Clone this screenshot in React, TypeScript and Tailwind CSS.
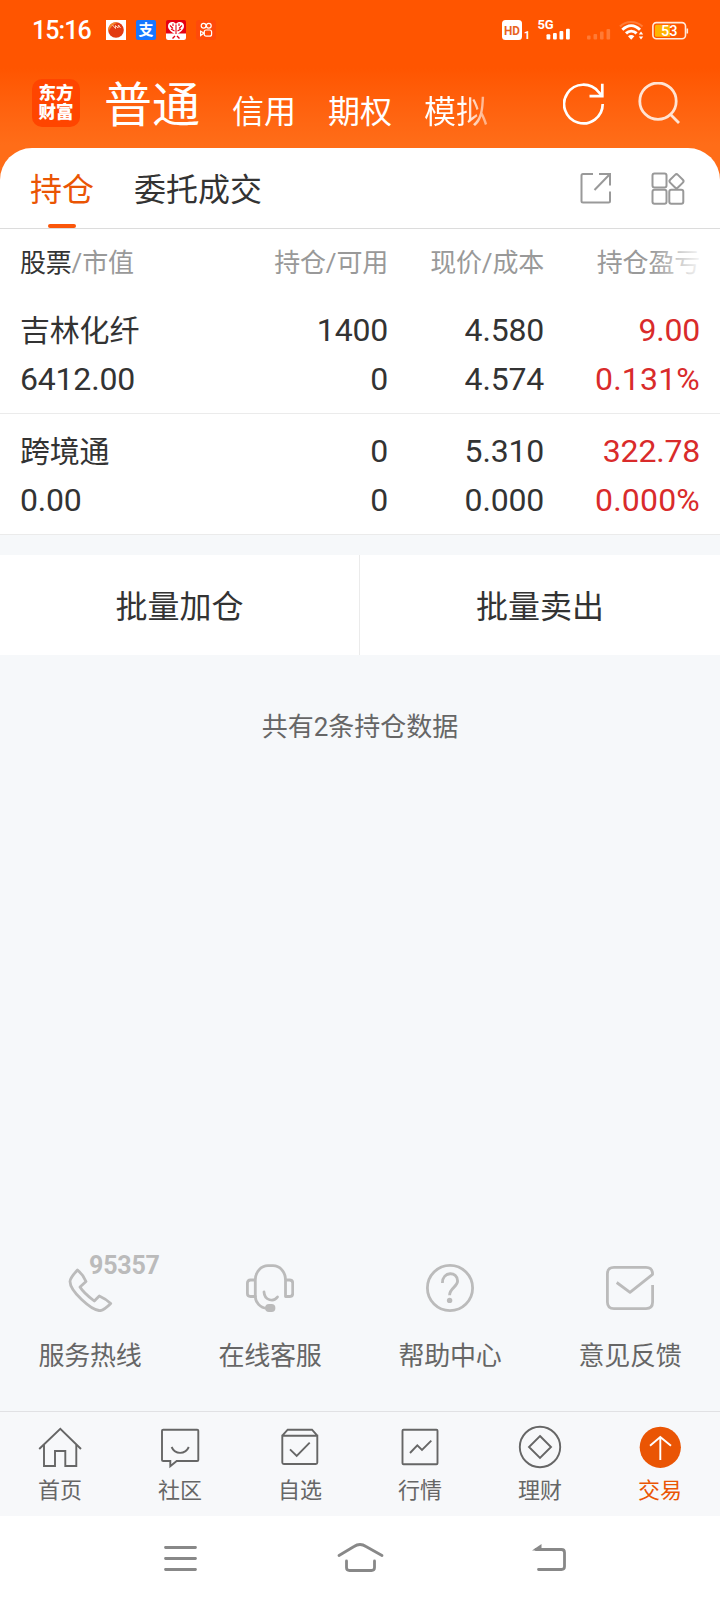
import React from 'react';

interface Holding {
  name: string;
  marketValue: string;
  quantity: string;
  available: string;
  price: string;
  cost: string;
  profit: string;
  profitRate: string;
}

const holdings: Holding[] = [
  {
    name: '吉林化纤',
    marketValue: '6412.00',
    quantity: '1400',
    available: '0',
    price: '4.580',
    cost: '4.574',
    profit: '9.00',
    profitRate: '0.131%',
  },
  {
    name: '跨境通',
    marketValue: '0.00',
    quantity: '0',
    available: '0',
    price: '5.310',
    cost: '0.000',
    profit: '322.78',
    profitRate: '0.000%',
  },
];

const services = [
  {
    label: '服务热线',
    badge: '95357',
    icon: (
      <path d="M11.5 6Q4 14 4 17.5C4 27 25 46.5 34 46.7Q38 46.3 44.7 39.5Q40 35 33.3 32L28.3 37C23 33 17 28 14 23L20 17.5Q17 10.5 11.5 6Z" />
    ),
  },
  {
    label: '在线客服',
    icon: (
      <>
        <path d="M9.3 33V16C9.3 8 15 1.7 22 1.7H27C34 1.7 39.5 8 39.5 16V32.5H43.5Q46.7 32.5 46.7 29.5V19Q46.7 16 43.5 16H39.5" />
        <path d="M9 16H4.5Q1.4 16 1.4 19V29.5Q1.4 32.5 4.5 32.5H9.3C9.3 38 14 44 21 44.2" />
        <path d="M18 28C18.5 37 28 38 31.5 33" strokeLinecap="round" />
        <rect x="20.5" y="41.5" width="7.5" height="5" rx="2.5" fill="currentColor" />
      </>
    ),
  },
  {
    label: '帮助中心',
    icon: (
      <>
        <circle cx="24" cy="24" r="22.6" />
        <path d="M16.4 19C16.400 7 31.600 7 31.600 17C31.600 23 23.600 24 23.600 31.200" />
        <circle cx="23.6" cy="36.4" r="2.7" fill="currentColor" stroke="none" />
      </>
    ),
  },
  {
    label: '意见反馈',
    icon: (
      <path d="M46.6 21V38Q46.6 44.6 40 44.6H8Q1.4 44.6 1.4 38V10Q1.4 3.4 8 3.4H40Q46.6 3.4 46.6 10.3L24 28.3L10.7 18.5" />
    ),
  },
];

const navItems = [
  {
    label: '首页',
    icon: (
      <>
        <path d="M0.2 23L21.3 2.7L42 23" />
        <path d="M5 19V40H16V25H26.3V40H37.3V19" />
      </>
    ),
  },
  {
    label: '社区',
    icon: (
      <>
        <path d="M4.2 3.7H38.2Q39.3 3.7 39.3 4.8V34Q39.3 35 38.2 35H17.7L11.3 40.3V35H4.2Q3 35 3 34V4.8Q3 3.7 4.2 3.7Z" />
        <path d="M12.6 21C16 28.8 26.2 28.8 29.8 21" />
      </>
    ),
  },
  {
    label: '自选',
    icon: (
      <>
        <path d="M3.3 9.7V36.5Q3.3 38 4.8 38H36.8Q38.3 38 38.3 36.5V9.7ZL8.7 3.7H33L38.3 9.7" />
        <path d="M11 23.3L17.7 30L30.7 16.7" />
      </>
    ),
  },
  {
    label: '行情',
    icon: (
      <>
        <rect x="3.5" y="3.8" width="35" height="34.5" rx="1" />
        <path d="M11 27L18.3 19.3L23 24L32.3 14.7" />
      </>
    ),
  },
  {
    label: '理财',
    icon: (
      <>
        <circle cx="21" cy="21" r="20.2" />
        <path d="M21 10L32 21L21 32L10 21Z" />
      </>
    ),
  },
  {
    label: '交易',
    active: true,
    icon: (
      <>
        <circle cx="21.3" cy="21.3" r="20.6" fill="#ea5504" stroke="none" />
        <path d="M21.3 34V11M11 19.7L21.3 11L32 19.7" stroke="#fff" />
      </>
    ),
  },
];

function StatusBar() {
  return (
    <div className="flex h-[60px] items-center pl-8 pr-[31px] text-white">
      <span className="w-[74px] text-[25px] leading-none font-medium tracking-[-0.9px]">15:16</span>
      <div className="flex gap-2.5">
        <svg width="20" height="20" viewBox="0 0 20 20">
          <rect width="20" height="20" fill="#fff" />
          <circle cx="10" cy="10" r="7.8" fill="#e23a12" />
          <path d="M2.500 12C1 5 7 1 12 2.500C7 4 4 8 2.500 12Z" fill="#f58a2c" />
          <path d="M6.500 5L9.500 8.500L9.500 5.500L12 8L12.500 5L14.500 8" fill="none" stroke="#ffe1c9" strokeWidth="0.900" />
        </svg>
        <div className="flex size-5 items-center justify-center rounded-xs bg-[#1777ff] text-[15px] leading-none font-bold">
          支
        </div>
        <svg width="20" height="20" viewBox="0 0 20 20">
          <rect width="20" height="20" rx="2" fill="#e60012" />
          <path d="M0 13.500H20V18Q20 20 18 20H2Q0 20 0 18Z" fill="#fff" />
          <path d="M10 15C6 12 2 10 2 6C2 2 7.500 0.500 10 4C12.500 0.500 18 2 18 6C18 10 14 12 10 15Z" fill="#fff" />
          <path
            d="M10 4.500V14M4 5.500L7 8.500M16 5.500L13 8.500M7 3.500V6M13 3.500V6M5 9L8.500 11M15 9L11.500 11"
            fill="none"
            stroke="#e60012"
            strokeWidth="1.100"
          />
          <path d="M6.5 18.500L9 16M13.500 18.500L11 16" fill="none" stroke="#e60012" strokeWidth="1.4" />
        </svg>
        <svg width="20" height="20" viewBox="0 0 20 20" fill="none" stroke="#fff" strokeWidth="1.2">
          <rect width="20" height="20" rx="3" fill="#ff4a0a" stroke="none" />
          <circle cx="7.6" cy="5.8" r="2.4" />
          <circle cx="12.8" cy="5.8" r="2.4" />
          <rect x="8.2" y="10" width="7.4" height="6.2" rx="2" />
          <path d="M8 13L4.6 11.3V15.5Z" />
        </svg>
      </div>

      <div className="ml-auto flex items-center">
        <svg className="overflow-visible" width="28" height="20" viewBox="0 0 28 20">
          <rect width="20" height="20" rx="3.5" fill="#fff" />
          <text x="2" y="14.800" fontSize="13" fontWeight="700" textLength="16" lengthAdjust="spacingAndGlyphs" fill="#e8641e">HD</text>
          <text x="22" y="19" fontSize="10.500" fontWeight="700" fill="#fff">1</text>
        </svg>
        <svg className="ml-2 overflow-visible" width="33" height="22" viewBox="0 -1 33 22" fill="#fff">
          <text x="-0.500" y="9.4" fontSize="13" fontWeight="700" textLength="16">5G</text>
          <rect x="8.500" y="14.2" width="3.8" height="5.4" rx="1" />
          <rect x="15" y="13" width="3.8" height="6.6" rx="1" />
          <rect x="21.500" y="11" width="3.8" height="8.6" rx="1" />
          <rect x="28" y="8.8" width="3.8" height="10.8" rx="1" />
        </svg>
        <svg className="ml-4" width="24" height="20" viewBox="0 0 24 20" fill="#ff7a35">
          <rect x="0" y="15.5" width="3.6" height="4" rx="1" />
          <rect x="6.5" y="14" width="3.6" height="5.5" rx="1" />
          <rect x="13" y="11.5" width="3.6" height="8" rx="1" />
          <rect x="19.5" y="9" width="3.6" height="10.5" rx="1" />
        </svg>
        <svg className="ml-2" width="25" height="20" viewBox="0 0 25 20" fill="none">
          <path d="M1 6.500C7 0.500 17 0.500 23.500 6.500" stroke="#ff7a35" strokeWidth="2.200" />
          <path d="M3.300 9.800C9 4.300 15.500 4.300 21 9.800" stroke="#fff" strokeWidth="2.900" />
          <path d="M7 13.400C10 10.400 14.500 10.400 17.600 13.400" stroke="#fff" strokeWidth="2.900" />
          <path d="M9 16.300Q12.200 13.800 15.400 16.300L12.200 19.800Z" fill="#fff" />
          <path d="M22 11.500L24.200 14.500H19.800ZM22 19.500L24.200 16.500H19.800Z" fill="#fff" />
        </svg>
        <svg className="ml-2" width="37" height="20" viewBox="0 0 37 20">
          <rect x="0.900" y="2.600" width="32.600" height="16.200" rx="3.500" fill="none" stroke="#ffe9dc" strokeWidth="1.600" />
          <path d="M4.500 4.800H18V16.800H4.500Q3 16.800 3 15.300V6.300Q3 4.800 4.500 4.800Z" fill="#ffb400" />
          <path d="M35.300 8.500V13.500" stroke="#ffe9dc" strokeWidth="1.600" />
          <text x="17.200" y="16" textAnchor="middle" fontSize="14.500" fontWeight="500" fill="#fff">53</text>
        </svg>
      </div>
    </div>
  );
}

function Header() {
  return (
    <div className="flex h-[88px] pt-[19px] pl-8 text-white">
      <div className="flex size-12 flex-col items-center justify-center rounded-[10px] bg-[#ff4500] text-[17.5px] leading-[19px] font-black">
        <span>东方</span>
        <span>财富</span>
      </div>
      <div className="ml-6 flex h-[49px] w-[411px] items-end gap-8 text-[32px] leading-8 whitespace-nowrap">
        <span className="-mb-0.5 text-[48px] leading-[48px]">普通</span>
        <span>信用</span>
        <span>期权</span>
        <span className="bg-linear-to-r from-white from-60% to-white/45 bg-clip-text text-transparent">模拟</span>
      </div>
      <svg className="mt-1 ml-12" width="42" height="42" viewBox="0 0 42 42" fill="none" stroke="#fff" strokeWidth="2.700">
        <path d="M39.700 21A19.300 19.300 0 1 1 35.500 9L39.300 13.200" />
        <path d="M39.300 0.800V13.200H26.500" />
      </svg>
      <svg className="mt-[3px] ml-[33px]" width="43" height="43" viewBox="0 0 43 43" fill="none" stroke="#ffe3d3" strokeWidth="2.800">
        <circle cx="20" cy="19.200" r="18.200" />
        <path d="M32.300 32.300L41 41" />
      </svg>
    </div>
  );
}

function PanelTabs() {
  return (
    <div className="flex h-[81px] items-center border-b border-[#dcdcdc] pl-[30px] pr-[35px] text-[32px] text-[#333]">
      <div className="relative flex h-full items-center pt-[3px] text-[#ea5504]">
        持仓
        <span className="absolute bottom-0 left-[18px] h-1 w-7 rounded-sm bg-[#fb560a]" />
      </div>
      <span className="ml-10 pt-[3px]">委托成交</span>
      <div className="ml-auto flex items-center gap-10 text-[#999]">
        <svg width="31" height="32" viewBox="0 0 31 32" fill="none" stroke="currentColor" strokeWidth="2">
          <path d="M13 2H3Q1.500 2 1.500 3.500V29Q1.500 30.500 3 30.500H28.500Q30 30.500 30 29V19.500" />
          <path d="M19 2H30V13.500M30 2L14.500 18" />
        </svg>
        <svg className="overflow-visible" width="34" height="32" viewBox="0 0 34 32" fill="none" stroke="currentColor" strokeWidth="2">
          <rect x="1.500" y="1.500" width="14" height="14" rx="2" />
          <rect x="1.500" y="17.700" width="14" height="14" rx="2" />
          <rect x="18.300" y="17.700" width="14" height="14" rx="2" />
          <rect x="20" y="3.700" width="11" height="11" rx="2" transform="rotate(45 25.500 9.200)" />
        </svg>
      </div>
    </div>
  );
}

function HoldingRow({ item }: { item: Holding }) {
  return (
    <div className="grid h-[121px] grid-cols-[1fr_156px_156px_156px] grid-rows-[49px_49px] items-center border-b border-[#ebebeb] px-5 pt-3 text-right text-[32px] tracking-[-0.2px] text-[#333]">
      <span className="pt-0.5 text-left text-[30px]">{item.name}</span>
      <span>{item.quantity}</span>
      <span>{item.price}</span>
      <span className="text-[#d92b2b]">{item.profit}</span>
      <span className="text-left">{item.marketValue}</span>
      <span>{item.available}</span>
      <span>{item.cost}</span>
      <span className="tracking-[0.2px] text-[#d92b2b]">{item.profitRate}</span>
    </div>
  );
}

function HoldingTable() {
  return (
    <div>
      <div className="grid h-16 grid-cols-[1fr_156px_156px_156px] items-center px-5 pt-1 text-right text-[26px] tracking-[-0.2px] text-[#999]">
        <span className="text-left">
          <span className="text-[#333]">股票</span>/市值
        </span>
        <span>持仓/可用</span>
        <span>现价/成本</span>
        <span className="relative">
          持仓盈亏
          <span className="absolute inset-y-0 right-0 w-12 bg-linear-to-r from-white/0 to-white/90" />
        </span>
      </div>
      {holdings.map((item) => (
        <HoldingRow key={item.name} item={item} />
      ))}
    </div>
  );
}

function Services() {
  return (
    <div className="mt-auto grid h-[147px] grid-cols-4 text-[26px] text-[#666]">
      {services.map((service) => (
        <div key={service.label} className="relative flex flex-col items-center">
          <svg className="text-[#bbb]" width="48" height="48" viewBox="0 0 48 48" fill="none" stroke="currentColor" strokeWidth="2.800" strokeLinejoin="round">
            {service.icon}
          </svg>
          {service.badge && (
            <span className="absolute -top-2.5 left-[89px] text-[25px] leading-6 font-bold tracking-[-0.2px] text-[#bbb]">
              {service.badge}
            </span>
          )}
          <span className="mt-[25px] leading-[38px] tracking-[-0.2px]">{service.label}</span>
        </div>
      ))}
    </div>
  );
}

function BottomNav() {
  return (
    <div className="grid h-[105px] grid-cols-6 border-t border-[#e1e1e4] bg-[#f7f8fa] pt-3.5 text-[22px] text-[#666]">
      {navItems.map((item) => (
        <div key={item.label} className="flex flex-col items-center">
          <svg className="overflow-visible" width="42" height="42" viewBox="0 0 42 42" fill="none" stroke="currentColor" strokeWidth="1.900">
            {item.icon}
          </svg>
          <span className={item.active ? 'mt-[7px] leading-8 text-[#ea5504]' : 'mt-[7px] leading-8'}>{item.label}</span>
        </div>
      ))}
    </div>
  );
}

function SystemBar() {
  return (
    <div className="flex h-[84px] items-center bg-white pl-[164px] text-[#888]">
      <svg width="33" height="30" viewBox="0 0 33 30" stroke="currentColor" strokeWidth="2.800" strokeLinecap="round">
        <path d="M1.500 4.500H31.500M1.500 15.500H31.500M1.500 26.500H31.500" />
      </svg>
      <svg className="ml-[139px]" width="48" height="32" viewBox="0 0 48 32" fill="none" stroke="currentColor" strokeWidth="2.800" strokeLinecap="round">
        <path d="M3 13.500L18 4.500Q21 2.500 24 2.500Q27 2.500 30 4.500L46 13.500" />
        <path d="M10.500 19V25.500Q10.500 28.500 13.500 28.500H35.500Q38.500 28.500 38.500 25.500V19" />
      </svg>
      <svg className="ml-[148px]" width="35" height="30" viewBox="0 0 35 30" fill="none" stroke="currentColor" strokeWidth="2.800" strokeLinecap="round">
        <path d="M4 6.500H29.500Q32.500 6.500 32.500 9.500V23.500Q32.500 26.500 29.500 26.500H6.500" />
        <path d="M0 7.500L9.500 1V7.500Z" fill="currentColor" stroke="none" />
      </svg>
    </div>
  );
}

export default function App() {
  return (
    <div className="flex h-[1600px] w-[720px] flex-col overflow-hidden bg-[#f6f8fa] font-[Roboto,'Noto_Sans_CJK_SC',sans-serif]">
      <div className="bg-linear-to-b from-[#ff5500] from-[68px] to-[#ff6d18] to-[145px]">
        <StatusBar />
        <Header />
        <div className="rounded-t-[32px] bg-white">
          <PanelTabs />
          <HoldingTable />
        </div>
      </div>

      {/* Batch actions */}
      <div className="mt-5 grid h-[100px] grid-cols-2 bg-white text-[32px] text-[#333]">
        <button className="border-r border-[#ebebeb] pt-[3px]">批量加仓</button>
        <button className="pt-[3px]">批量卖出</button>
      </div>

      <p className="mt-[52px] text-center text-[26px] leading-10 text-[#666]">共有2条持仓数据</p>

      <Services />
      <BottomNav />
      <SystemBar />
    </div>
  );
}
